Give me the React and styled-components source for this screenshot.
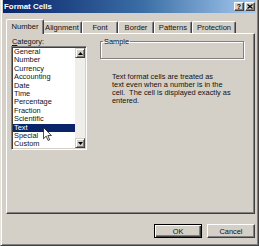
import React from 'react';
import styled, { createGlobalStyle } from 'styled-components';

const GlobalStyle = createGlobalStyle`
  html, body {
    margin: 0;
    padding: 0;
    background: #d4d0c8;
  }
  body {
    font-family: "Liberation Sans", Arial, sans-serif;
  }
`;

const Window = styled.div`
  position: relative;
  width: 259px;
  height: 246px;
  box-sizing: border-box;
  background: #d4d0c8;
  border-style: solid;
  border-width: 0 1px 1px 1px;
  border-color: #d4d0c8 #404040 #404040 #e4e2dc;
  box-shadow: inset 1px 0 0 #ffffff, inset -1px -1px 0 #808080;
  padding: 0 2px;
  display: flex;
  flex-direction: column;
  font-size: 7.4px;
  color: #111;
  overflow: hidden;
`;

const TitleBar = styled.div`
  height: 13px;
  flex: none;
  display: flex;
  align-items: center;
  padding-left: 1px;
  background: linear-gradient(to right, #0a246a 0%, #3a6ea5 55%, #a6caf0 100%);
`;

const Title = styled.div`
  flex: 1;
  color: #fff;
  font-weight: bold;
  font-size: 7.9px;
`;

const CaptionButtons = styled.div`
  display: flex;
  gap: 1px;
  margin-right: 1px;
`;

const CaptionButton = styled.div`
  width: 10px;
  height: 9px;
  box-sizing: border-box;
  background: #d4d0c8;
  border-style: solid;
  border-width: 1px;
  border-color: #fff #404040 #404040 #fff;
  box-shadow: inset -1px -1px 0 #808080;
  display: flex;
  align-items: center;
  justify-content: center;
  font-weight: bold;
  font-size: 7px;
  line-height: 1;
  color: #000;
`;

const Body = styled.div`
  flex: 1;
  display: flex;
  flex-direction: column;
  padding: 6px 1px 0 3px;
`;

const TabStrip = styled.div`
  height: 14px;
  display: flex;
  align-items: flex-end;
  padding-left: 2px;
`;

const Tab = styled.div`
  position: relative;
  z-index: ${(p) => (p.$active ? 1 : 0)};
  width: ${(p) => p.$w}px;
  height: ${(p) => (p.$active ? 15 : 12)}px;
  margin: ${(p) => (p.$active ? '0 -2px -1px -2px' : '0')};
  padding-bottom: ${(p) => (p.$active ? 2 : 0)}px;
  box-sizing: border-box;
  background: #d4d0c8;
  border-style: solid;
  border-width: 1px 1px 0 1px;
  border-color: #fff #404040 #fff #fff;
  box-shadow: inset -1px 0 0 #808080;
  border-radius: 2px 2px 0 0;
  display: flex;
  align-items: center;
  justify-content: center;
  white-space: nowrap;
  font-size: 7.6px;
`;

const Panel = styled.div`
  height: 181px;
  flex: none;
  box-sizing: border-box;
  border-style: solid;
  border-width: 1px;
  border-color: #fff #404040 #404040 #fff;
  box-shadow: inset -1px -1px 0 #808080;
  display: flex;
  padding: 3px 0 0 4px;
`;

const LeftColumn = styled.div`
  width: 76px;
  display: flex;
  flex-direction: column;
`;

const FieldLabel = styled.div`
  height: 9px;
  line-height: 9px;
  padding-left: 1px;
  u {
    text-decoration: underline;
  }
`;

const ListBox = styled.div`
  height: 104px;
  box-sizing: border-box;
  background: #fff;
  border-style: solid;
  border-width: 1px;
  border-color: #808080 #fff #fff #808080;
  box-shadow: inset 1px 1px 0 #404040, inset -1px -1px 0 #d4d0c8;
  padding: 1px;
  display: flex;
`;

const Items = styled.div`
  flex: 1;
  overflow: hidden;
`;

const Item = styled.div`
  height: 8.4px;
  line-height: 8.4px;
  padding-left: 1px;
  white-space: nowrap;
  background: ${(p) => (p.$selected ? '#0a246a' : 'transparent')};
  color: ${(p) => (p.$selected ? '#fff' : '#111')};
`;

const ScrollBar = styled.div`
  width: 10px;
  display: flex;
  flex-direction: column;
  justify-content: space-between;
  background: #efeeeb;
`;

const ArrowButton = styled.div`
  height: 10px;
  box-sizing: border-box;
  background: #d4d0c8;
  border-style: solid;
  border-width: 1px;
  border-color: #d4d0c8 #404040 #404040 #d4d0c8;
  box-shadow: inset 1px 1px 0 #fff, inset -1px -1px 0 #808080;
  display: flex;
  align-items: center;
  justify-content: center;
`;

const RightColumn = styled.div`
  flex: 1;
  display: flex;
  flex-direction: column;
  padding: 0 10px 0 13px;
`;

const GroupBox = styled.fieldset`
  margin: 0;
  padding: 0;
  min-width: 0;
  height: 22px;
  box-sizing: border-box;
  border: 1px solid #808080;
  box-shadow: 1px 1px 0 #fff, inset 1px 1px 0 #fff;
  legend {
    padding: 0 1px;
    margin-left: 2px;
    font-size: 7.4px;
    line-height: 9px;
  }
`;

const Description = styled.div`
  margin-top: 14px;
  padding-left: 12px;
  line-height: 8.1px;
  white-space: pre;
`;

const ButtonRow = styled.div`
  display: flex;
  justify-content: flex-end;
  gap: 5px;
  margin-top: 10px;
`;

const Button = styled.div`
  width: 48px;
  height: 14px;
  box-sizing: border-box;
  background: #d4d0c8;
  border-style: solid;
  border-width: 1px;
  border-color: ${(p) => (p.$default ? '#000' : '#fff #404040 #404040 #fff')};
  box-shadow: ${(p) =>
    p.$default
      ? 'inset 1px 1px 0 #fff, inset -1px -1px 0 #404040, inset -2px -2px 0 #808080'
      : 'inset -1px -1px 0 #808080'};
  display: flex;
  align-items: center;
  justify-content: center;
`;

const Cursor = styled.svg`
  position: absolute;
  left: 42px;
  top: 127px;
  pointer-events: none;
`;

const tabs = [
  { label: 'Number', w: 38, active: true },
  { label: 'Alignment', w: 40 },
  { label: 'Font', w: 36 },
  { label: 'Border', w: 36 },
  { label: 'Patterns', w: 38 },
  { label: 'Protection', w: 44 },
];

const categories = [
  'General',
  'Number',
  'Currency',
  'Accounting',
  'Date',
  'Time',
  'Percentage',
  'Fraction',
  'Scientific',
  'Text',
  'Special',
  'Custom',
];

const Arrow = ({ up }) => (
  <svg width="5" height="3" viewBox="0 0 5 3">
    <polygon points={up ? '2.5,0 5,3 0,3' : '0,0 5,0 2.5,3'} fill="#000" />
  </svg>
);

const App = () => {
  return (
    <>
      <GlobalStyle />
      <Window>
        <TitleBar>
          <Title>Format Cells</Title>
          <CaptionButtons>
            <CaptionButton>?</CaptionButton>
            <CaptionButton>
              <svg width="6" height="5" viewBox="0 0 6 5">
                <path d="M0.5 0.5 L5.5 4.5 M5.5 0.5 L0.5 4.5" stroke="#000" strokeWidth="1.2" />
              </svg>
            </CaptionButton>
          </CaptionButtons>
        </TitleBar>
        <Body>
          <TabStrip>
            {tabs.map((t) => (
              <Tab key={t.label} $active={t.active} $w={t.w}>
                {t.label}
              </Tab>
            ))}
          </TabStrip>
          <Panel>
            <LeftColumn>
              <FieldLabel>
                <u>C</u>ategory:
              </FieldLabel>
              <ListBox>
                <Items>
                  {categories.map((c) => (
                    <Item key={c} $selected={c === 'Text'}>
                      {c}
                    </Item>
                  ))}
                </Items>
                <ScrollBar>
                  <ArrowButton>
                    <Arrow up />
                  </ArrowButton>
                  <ArrowButton>
                    <Arrow />
                  </ArrowButton>
                </ScrollBar>
              </ListBox>
            </LeftColumn>
            <RightColumn>
              <GroupBox>
                <legend>Sample</legend>
              </GroupBox>
              <Description>
                {'Text format cells are treated as\ntext even when a number is in the\ncell.  The cell is displayed exactly as\nentered.'}
              </Description>
            </RightColumn>
          </Panel>
          <ButtonRow>
            <Button $default>OK</Button>
            <Button>Cancel</Button>
          </ButtonRow>
        </Body>
        <Cursor width="9" height="14" viewBox="0 0 12 19">
          <path d="M0.5 0.5 L0.5 16 L4.2 12.4 L6.8 18.2 L9 17.3 L6.5 11.6 L11.3 11.6 Z" fill="#fff" stroke="#000" strokeWidth="1" />
        </Cursor>
      </Window>
    </>
  );
};

export default App;
